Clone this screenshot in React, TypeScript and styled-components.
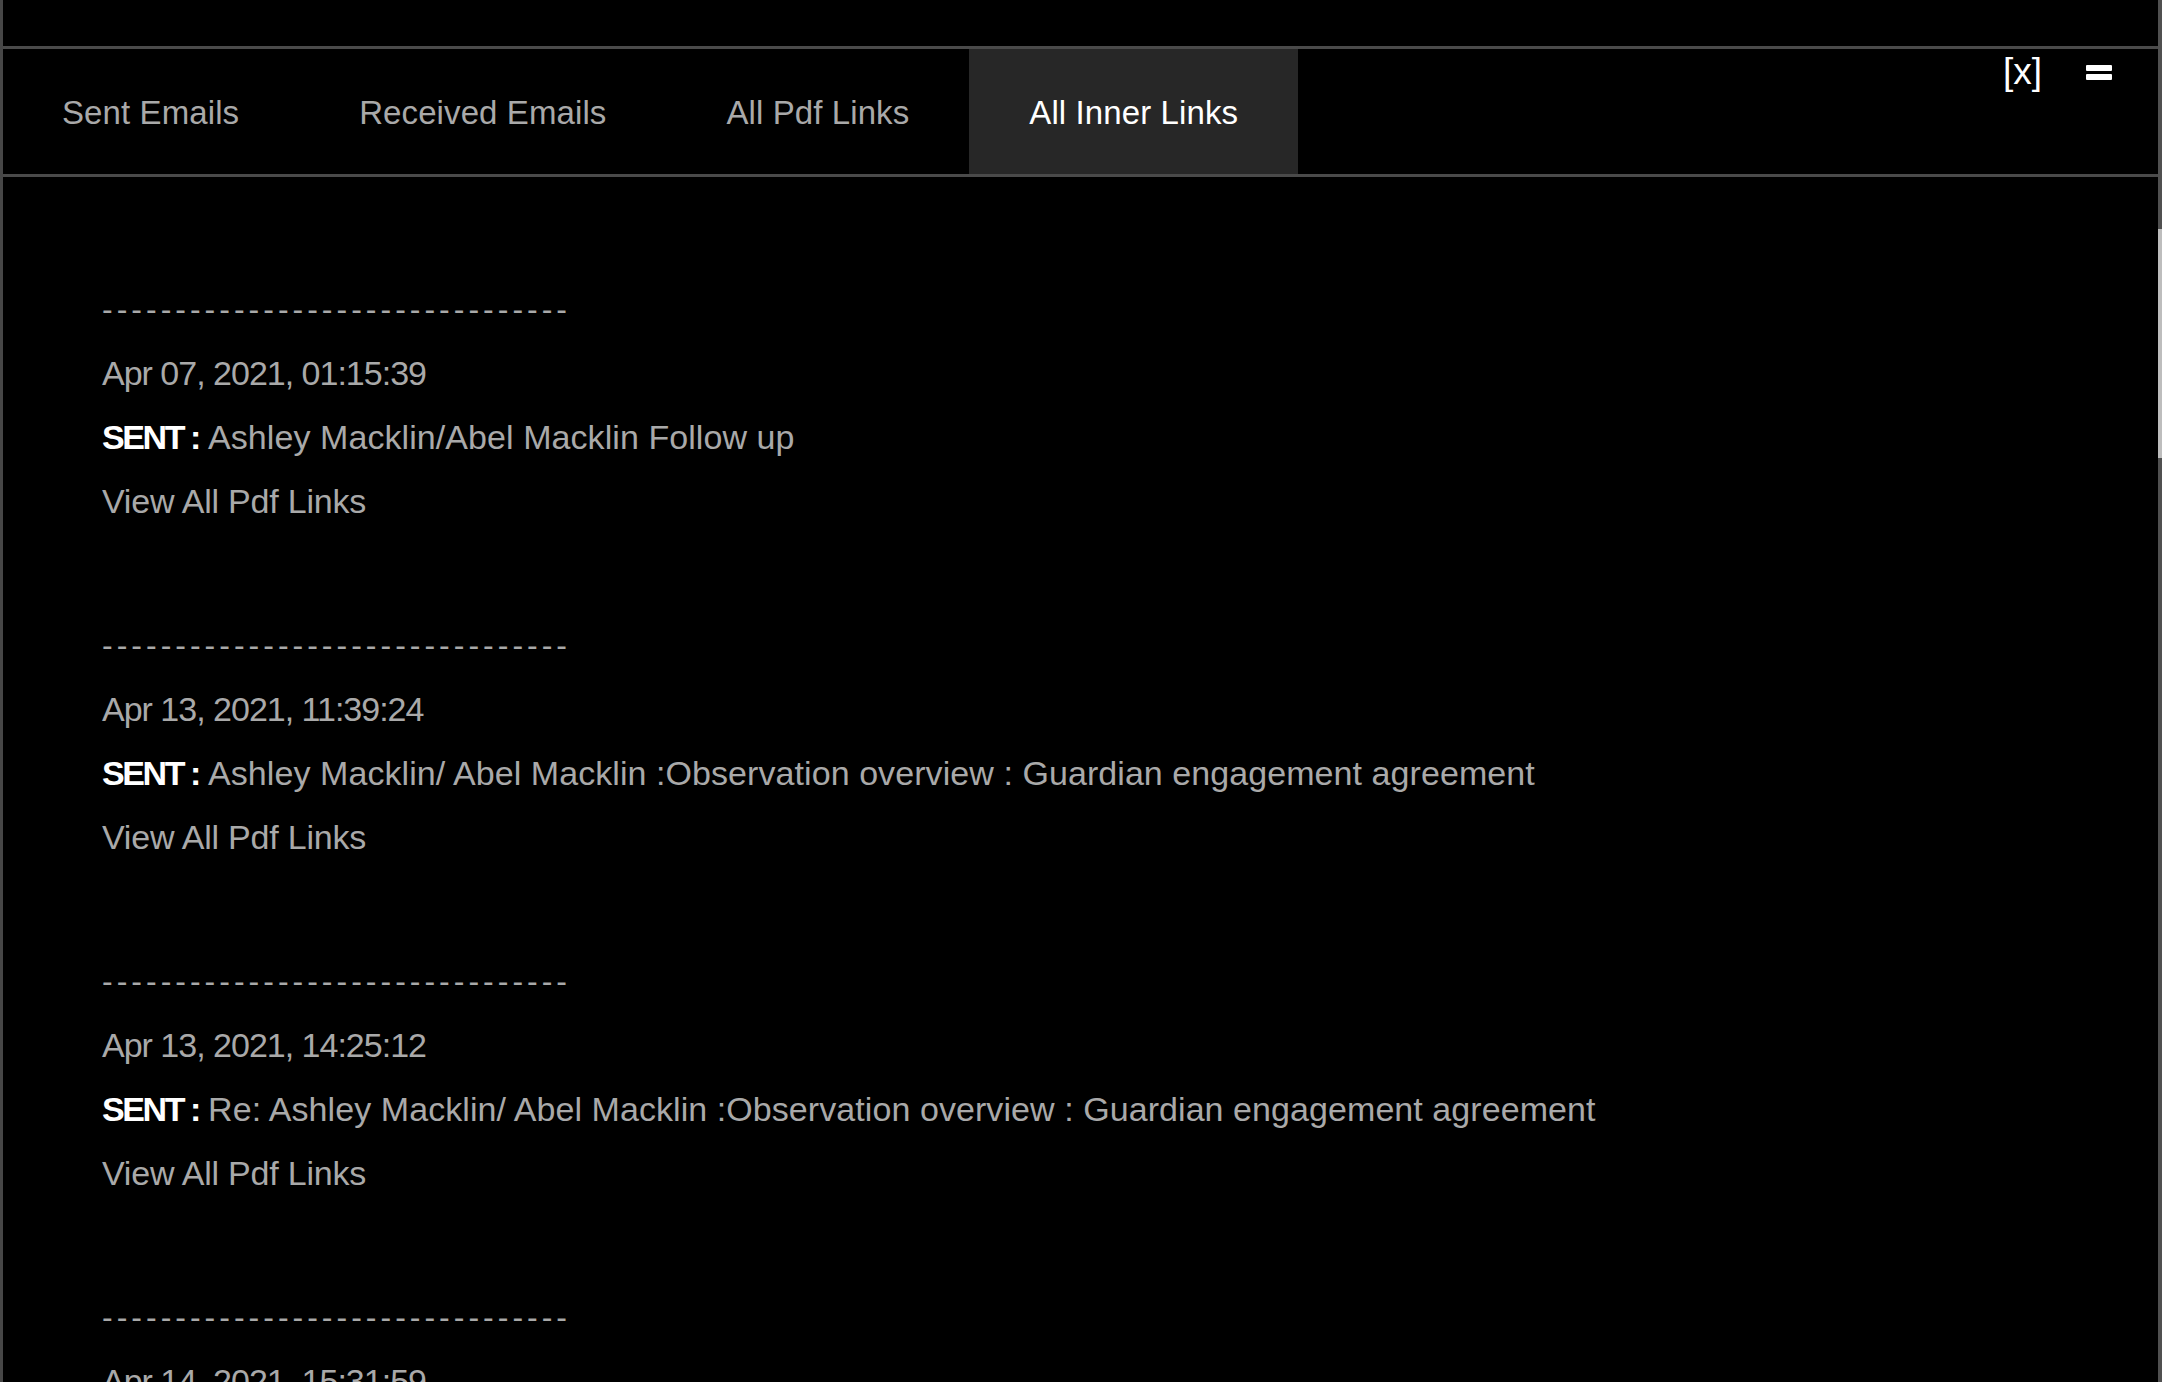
import React from "react";
import styled, { createGlobalStyle } from "styled-components";

const GlobalStyle = createGlobalStyle`
  html, body {
    margin: 0;
    padding: 0;
    background: #000;
  }
  #root {
    width: 100%;
  }
`;

const Page = styled.div`
  display: flex;
  flex-direction: row;
  width: 2162px;
  height: 1382px;
  overflow: hidden;
  background: #000;
  box-sizing: border-box;
  border-left: 3px solid #474747;
  font-family: "Liberation Sans", Arial, sans-serif;
`;

const Main = styled.div`
  flex: 1;
  display: flex;
  flex-direction: column;
  min-width: 0;
`;

const TopGap = styled.div`
  height: 46px;
  flex: none;
`;

const Header = styled.div`
  flex: none;
  display: flex;
  flex-direction: row;
  height: 125px;
  border-top: 3px solid #4a4a4a;
  border-bottom: 3px solid #4a4a4a;
`;

const Tab = styled.div<{ $active?: boolean }>`
  display: flex;
  align-items: center;
  padding: 2px 60px 0;
  font-size: 33px;
  letter-spacing: 0.1px;
  color: ${(p) => (p.$active ? "#ffffff" : "#a9a9a9")};
  background: ${(p) => (p.$active ? "#272727" : "transparent")};
  white-space: nowrap;
  cursor: pointer;

  &:first-child {
    padding-left: 59px;
  }
`;

const Controls = styled.div`
  margin-left: auto;
  display: flex;
  flex-direction: row;
  align-items: flex-start;
  gap: 44px;
  padding-right: 46px;
`;

const CloseButton = styled.div`
  font-size: 37px;
  line-height: 37px;
  margin-top: 4px;
  color: #ffffff;
  font-family: "Liberation Sans", Arial, sans-serif;
  cursor: pointer;
`;

const MenuButton = styled.div`
  display: flex;
  flex-direction: column;
  gap: 3px;
  margin-top: 16px;
  cursor: pointer;
`;

const MenuBar = styled.span`
  display: block;
  width: 26px;
  height: 6px;
  border-radius: 1px;
  background: #ffffff;
`;

const Content = styled.div`
  flex: 1;
  overflow: hidden;
  padding: 100px 0 0 99px;
  display: flex;
  flex-direction: column;
  gap: 80px;
`;

const Entry = styled.div`
  display: flex;
  flex-direction: column;
`;

const Line = styled.div`
  font-size: 34px;
  line-height: 64px;
  height: 64px;
  color: #a9a9a9;
  white-space: nowrap;
`;

const Dashes = styled(Line)`
  font-size: 32px;
  letter-spacing: 4px;
`;

const DateLine = styled(Line)`
  letter-spacing: -1px;
`;

const SubjectLine = styled(Line)`
  letter-spacing: 0.07px;
`;

const Label = styled.span`
  color: #ffffff;
  font-weight: 700;
  letter-spacing: -2.4px;
  margin-right: 9px;
`;

const LinkText = styled(Line)`
  letter-spacing: -0.2px;
  cursor: pointer;
`;

const RightRail = styled.div`
  flex: none;
  width: 4px;
  background: #505050;
  display: flex;
  flex-direction: column;
`;

const Thumb = styled.div`
  margin-top: 229px;
  height: 229px;
  background: #bdbdbd;
`;

const tabs = ["Sent Emails", "Received Emails", "All Pdf Links", "All Inner Links"];

const entries = [
  { date: "Apr 07, 2021, 01:15:39", subject: "Ashley Macklin/Abel Macklin Follow up" },
  {
    date: "Apr 13, 2021, 11:39:24",
    subject: "Ashley Macklin/ Abel Macklin :Observation overview : Guardian engagement agreement",
  },
  {
    date: "Apr 13, 2021, 14:25:12",
    subject: "Re: Ashley Macklin/ Abel Macklin :Observation overview : Guardian engagement agreement",
  },
  { date: "Apr 14, 2021, 15:31:59", subject: "Ashley Macklin/ Abel Macklin Follow up" },
];

const DASHES = "-".repeat(32);

export default function App() {
  return (
    <>
      <GlobalStyle />
      <Page>
        <Main>
          <TopGap />
          <Header>
            {tabs.map((t, i) => (
              <Tab key={t} $active={i === 3}>
                {t}
              </Tab>
            ))}
            <Controls>
              <CloseButton>[x]</CloseButton>
              <MenuButton>
                <MenuBar />
                <MenuBar />
              </MenuButton>
            </Controls>
          </Header>
          <Content>
            {entries.map((e) => (
              <Entry key={e.date}>
                <Dashes>{DASHES}</Dashes>
                <DateLine>{e.date}</DateLine>
                <SubjectLine>
                  <Label>SENT :</Label>
                  {e.subject}
                </SubjectLine>
                <LinkText>View All Pdf Links</LinkText>
              </Entry>
            ))}
          </Content>
        </Main>
        <RightRail>
          <Thumb />
        </RightRail>
      </Page>
    </>
  );
}
